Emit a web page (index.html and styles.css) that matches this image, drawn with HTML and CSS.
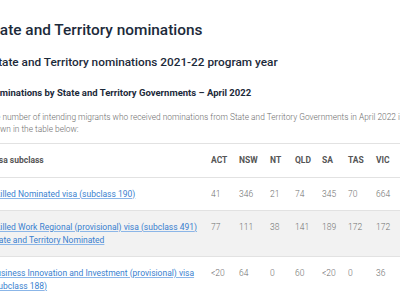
FILE: index.html
```html
<!DOCTYPE html>
<html lang="en">
<head>
<meta charset="utf-8">
<title>State and Territory nominations</title>
<link rel="stylesheet" href="styles.css">
</head>
<body>
<main class="page">
  <h1 class="title">State and Territory nominations</h1>
  <h2 class="subtitle">State and Territory nominations 2021-22 program year</h2>
  <h3 class="section">Nominations by State and Territory Governments – April 2022</h3>
  <p class="intro">The number of intending migrants who received nominations from State and Territory Governments in April 2022 is shown in the table below:</p>
  <table class="data">
    <thead>
      <tr>
        <th class="visa">Visa subclass</th>
        <th class="c-act">ACT</th><th class="c-nsw">NSW</th><th class="c-nt">NT</th><th class="c-qld">QLD</th><th class="c-sa">SA</th><th class="c-tas">TAS</th><th class="c-vic">VIC</th>
      </tr>
    </thead>
    <tbody>
      <tr>
        <td class="visa"><a href="#">Skilled Nominated visa (subclass 190)</a></td>
        <td>41</td><td>346</td><td>21</td><td>74</td><td>345</td><td>70</td><td>664</td>
      </tr>
      <tr class="alt">
        <td class="visa"><a href="#">Skilled Work Regional (provisional) visa (subclass 491) State and Territory Nominated</a></td>
        <td>77</td><td>111</td><td>38</td><td>141</td><td>189</td><td>172</td><td>172</td>
      </tr>
      <tr>
        <td class="visa"><a href="#">Business Innovation and Investment (provisional) visa (subclass 188)</a></td>
        <td>&lt;20</td><td>64</td><td>0</td><td>60</td><td>&lt;20</td><td>0</td><td>36</td>
      </tr>
    </tbody>
  </table>
</main>
</body>
</html>
```

FILE: styles.css
```css
html, body {
  margin: 0;
  padding: 0;
  overflow: hidden;
  background: #ffffff;
}

body {
  font-family: Roboto, "Liberation Sans", Arial, sans-serif;
}

.page {
  margin-left: -9px;
  width: 470px;
  padding-top: 20px;
}

.title {
  margin: 0 0 0 -5.6px;
  font-size: 15.4px;
  line-height: 20px;
  font-weight: 500;
  color: #1c2a3a;
}

.subtitle {
  margin: 14px 0 0;
  font-size: 11.8px;
  line-height: 16px;
  font-weight: 500;
  color: #1c2a3a;
}

.section {
  margin: 16px 0 0 -3.3px;
  font-size: 9.5px;
  line-height: 14px;
  font-weight: 700;
  color: #1c2a3a;
}

.intro {
  margin: 11px 0 0 -4.5px;
  width: 425px;
  font-size: 8.35px;
  line-height: 12px;
  font-weight: 300;
  color: #6e6e6e;
}

.data {
  margin-top: 8px;
  border-collapse: collapse;
  font-size: 8.5px;
  line-height: 13px;
}

.data th,
.data td {
  text-align: left;
  vertical-align: top;
  padding: 9.5px 0;
  border-bottom: 1px solid #e2e2e2;
}

.data thead th {
  border-top: 1px solid #e2e2e2;
  padding-top: 10px;
  padding-bottom: 10px;
  font-weight: 700;
  color: #555555;
}

.data td {
  font-weight: 300;
  color: #707070;
}

.data .visa {
  width: 210px;
  padding-right: 10px;
}

.data .c-act { width: 28px; }
.data .c-nsw { width: 31px; }
.data .c-nt { width: 25px; }
.data .c-qld { width: 27px; }
.data .c-sa { width: 26px; }
.data .c-tas { width: 28px; }
.data .c-vic { width: 40px; }

.data .alt td {
  background: #f2f2f2;
}

.data a {
  color: #3a7fcf;
  font-weight: 400;
  text-decoration: underline;
  text-decoration-color: #8bb6e8;
}
```
